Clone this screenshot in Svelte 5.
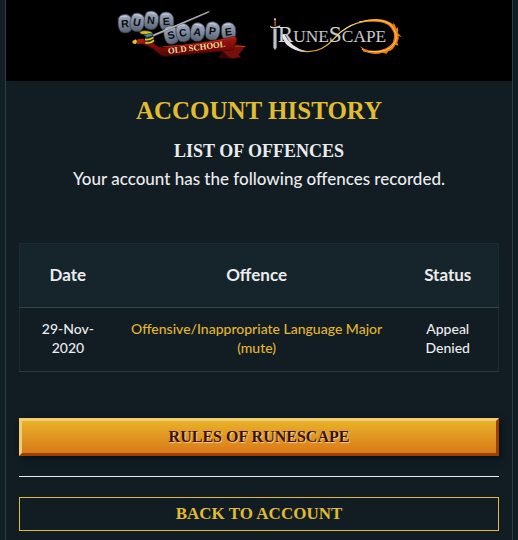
<script>
  const offences = [
    { date: "29-Nov-2020", offence: "Offensive/Inappropriate Language Major (mute)", status: "Appeal Denied" },
  ];

  // rune stones of the Old School logo: position, tilt and letter
  const stones = [
    { x: 25, y: 41, tilt: -6, letter: "R" },
    { x: 61, y: 37, tilt: 10, letter: "U" },
    { x: 103, y: 31, tilt: 6, letter: "N" },
    { x: 149, y: 34, tilt: -4, letter: "E" },
    { x: 163, y: 75, tilt: -14, letter: "S" },
    { x: 199, y: 68, tilt: -10, letter: "C" },
    { x: 242, y: 66, tilt: 10, letter: "A" },
    { x: 287, y: 63, tilt: 6, letter: "P" },
    { x: 335, y: 65, tilt: -6, letter: "E" },
  ];
</script>

<div class="panel">
  <header>
    <a class="logo" href="#oldschool" aria-label="Old School RuneScape">
      <svg width="130" height="50" viewBox="0 0 390 150" aria-hidden="true">
        <defs>
          <linearGradient id="stone" x1="0" y1="0" x2="0" y2="1">
            <stop offset="0" stop-color="#a7b0c0" />
            <stop offset="0.5" stop-color="#7f8a9c" />
            <stop offset="1" stop-color="#586273" />
          </linearGradient>
          <linearGradient id="ribbon" x1="0" y1="0" x2="0" y2="1">
            <stop offset="0" stop-color="#a31a14" />
            <stop offset="0.5" stop-color="#7f0d0a" />
            <stop offset="1" stop-color="#4e0605" />
          </linearGradient>
        </defs>
        {#each stones as stone}
          <g transform="translate({stone.x + 2} {stone.y}) rotate({stone.tilt})">
            <path d="M-18 -18 Q-14 -28 0 -28 Q17 -27 22 -11 Q25 15 13 25 Q-2 32 -15 23 Q-25 8 -18 -18Z" fill="url(#stone)" stroke="#323a48" stroke-width="2" />
            <path d="M-12 -20 Q-3 -25 9 -20" fill="none" stroke="#c4ccda" stroke-width="3" />
            <text class="rune" x="0" y="11">{stone.letter}</text>
          </g>
        {/each}
        <path d="M108 74 L276 5 L283 1 L278 8 L112 80Z" fill="#85888e" />
        <path d="M112 76 L277 5" stroke="#d4d5d8" stroke-width="2" />
        <path d="M318 121 L311 144 L356 145 L375 142 L368 134 L388 109 L359 104 L322 112Z" fill="#75100c" stroke="#3a0504" stroke-width="2" />
        <path d="M342 111 Q360 106 388 110" fill="none" stroke="#c73b22" stroke-width="3" />
        <path d="M315 120 L342 143 L314 144Z" fill="#330404" />
        <path d="M63 91 Q96 85 119 105 Q135 119 157 108 Q241 104 357 79 L363 87 L352 120 Q248 129 146 139 Q126 133 112 116 Q91 104 75 101Z" fill="url(#ribbon)" stroke="#4a0604" stroke-width="2" />
        <path d="M140 110 Q252 106 357 81" fill="none" stroke="#cb3928" stroke-width="2" />
        <path d="M54 96 L66 88 L84 86 L82 98 L66 103Z" fill="#a81d12" />
        <path d="M50 92 L60 88 L63 96 L58 103 L49 99Z" fill="#e4c52b" />
        <path d="M71 66 Q84 58 107 66 L111 75 L98 74 L75 72Z" fill="#d8bd2a" stroke="#58470a" stroke-width="2" />
        <path d="M87 79 Q102 86 110 76 Q119 87 113 99 Q99 108 89 96Z" fill="#2d2b15" />
        <path d="M87 88 Q102 91 112 82 M88 98 Q103 102 114 91" fill="none" stroke="#e5cb30" stroke-width="5" />
        <path d="M84 77 Q96 69 107 71 L110 78 L94 82Z" fill="#4a9199" stroke="#153a40" stroke-width="2" />
        <text class="school" x="242" y="121" transform="rotate(-7 242 112)">OLD SCHOOL</text>
      </svg>
    </a>
    <a class="logo" href="#runescape" aria-label="RuneScape">
      <svg width="132" height="40" viewBox="0 0 396 120" aria-hidden="true">
        <defs>
          <linearGradient id="steel" x1="0" y1="0" x2="0" y2="1">
            <stop offset="0" stop-color="#ffffff" />
            <stop offset="0.5" stop-color="#b9bdc0" />
            <stop offset="1" stop-color="#eceeee" />
          </linearGradient>
          <linearGradient id="flame" x1="0" y1="0" x2="1" y2="0">
            <stop offset="0" stop-color="#d8d8d2" />
            <stop offset="0.15" stop-color="#d9961c" />
            <stop offset="0.5" stop-color="#ffe080" />
            <stop offset="0.75" stop-color="#f5a31c" />
            <stop offset="1" stop-color="#eb6712" />
          </linearGradient>
        </defs>
        <text class="steel" x="23" y="74"><tspan class="big">R</tspan>UNE<tspan class="big">S</tspan>CAPE</text>
        <path d="M10 35 H20 V92 L15 99 L10 92Z" fill="#a9adb0" stroke="#66696b" />
        <path d="M15 35 V94" stroke="#eee" stroke-width="2" />
        <path d="M0 26 Q12 34 31 25 L30 31 Q15 36 2 32Z" fill="#d7d7d5" />
        <path d="M13 9 H18 V28 H13Z" fill="#a04e20" />
        <circle cx="15" cy="7" r="3" fill="#ddd" />
        <path d="M43 52 Q62 92 111 104 Q77 106 51 84 Q38 70 36 54Z" fill="#e3e5e4" />
        <path d="M83 99 Q145 117 190 67 Q246 3 332 12 Q382 20 382 59 Q375 105 315 107 Q286 106 276 96" fill="none" stroke="url(#flame)" stroke-width="4" />
        <path d="M270 16 Q322 -4 360 16 L371 23 L369 16 Q378 25 379 35 L384 30 Q386 41 383 47 L395 60 L386 57 Q388 67 382 76 L385 86 L376 83 Q371 99 355 103 L350 110 L338 107 Q309 116 287 103 L280 105 L279 98 L269 87 L284 96 Q313 108 348 94 Q379 77 371 47 Q360 16 322 14 Q295 12 270 16Z" fill="#ee7b15" />
        <path d="M267 15 Q329 -1 361 22 Q387 49 375 77 Q355 110 296 103" fill="none" stroke="#ffd247" stroke-width="3" />
      </svg>
    </a>
  </header>

  <main>
    <h1>ACCOUNT HISTORY</h1>
    <h2>LIST OF OFFENCES</h2>
    <p class="intro">Your account has the following offences recorded.</p>

    <table>
      <thead>
        <tr>
          <th class="col-date" scope="col">Date</th>
          <th scope="col">Offence</th>
          <th class="col-status" scope="col">Status</th>
        </tr>
      </thead>
      <tbody>
        {#each offences as row}
          <tr>
            <td>{row.date}</td>
            <td><a href="#offence">{row.offence}</a></td>
            <td>{row.status}</td>
          </tr>
        {/each}
      </tbody>
    </table>

    <a class="btn btn-gold" href="#rules">RULES OF RUNESCAPE</a>
    <hr />
    <a class="btn btn-outline" href="#account">BACK TO ACCOUNT</a>
  </main>
</div>

<style>
  :global(body) {
    margin: 0;
    background: #111e23;
  }

  .panel {
    margin: 0 5px;
    border: solid #2b3d47;
    border-width: 0 1px;
    background: #111d22;
    color: #ecebee;
    font-family: Lato, "Open Sans", sans-serif;
    font-weight: 500;
    text-align: center;
  }

  header {
    display: flex;
    justify-content: center;
    align-items: flex-start;
    gap: 24px;
    box-sizing: border-box;
    height: 81px;
    padding-top: 10px;
    background: #000;
  }

  .logo {
    display: block;
  }

  .logo + .logo {
    padding-top: 7px;
  }

  .logo svg {
    display: block;
    overflow: visible;
  }

  .rune {
    fill: #0b0d12;
    font: bold 32px "Liberation Sans", sans-serif;
    text-anchor: middle;
  }

  .school {
    fill: #f3d793;
    font: bold 26px "Liberation Serif", serif;
    text-anchor: middle;
  }

  .steel {
    fill: url(#steel);
    font: 52px "Liberation Serif", serif;
  }

  .steel .big {
    font-size: 70px;
  }

  main {
    padding: 14px 13px 32px;
  }

  h1,
  h2,
  .btn {
    font-family: "Liberation Serif", serif;
    font-weight: bold;
  }

  h1 {
    margin: 0;
    color: #e1bb34;
    font-size: 25px;
    line-height: 32px;
  }

  h2 {
    margin: 12px 0 4px;
    font-size: 18px;
    line-height: 24px;
  }

  .intro {
    margin: 0 0 52px;
    font-size: 17px;
    line-height: 24px;
  }

  table {
    width: 100%;
    table-layout: fixed;
    border: 1px solid #1c2b32;
    border-bottom-color: #2b3941;
    border-collapse: collapse;
  }

  th {
    height: 60px;
    padding: 0 0 3px;
    border-bottom: 1px solid #34434a;
    background: #15252b;
    font-size: 17px;
    font-weight: bold;
  }

  td {
    padding: 11px 12px 14px;
    font-size: 14px;
    line-height: 19px;
    vertical-align: top;
  }

  .col-date {
    width: 20%;
  }

  .col-status {
    width: 21%;
  }

  td:last-child {
    padding-inline: 20px;
  }

  td a {
    color: #e1b52e;
    text-decoration: none;
  }

  .btn {
    display: block;
    box-sizing: border-box;
    font-size: 17px;
    line-height: 32px;
    text-decoration: none;
  }

  .btn-gold {
    margin-top: 46px;
    border: 3px solid;
    border-color: #f0cd70 #9f3e00 #9f3e00 #f0cd70;
    background: linear-gradient(#e8b129, #d97a18);
    box-shadow: 2px 3px 5px #03141c;
    color: #3d120c;
    font-size: 16px;
    text-shadow: 1px 1px 1px #f3d59a;
  }

  .btn-outline {
    border: 1px solid #e1bb34;
    color: #e1bb34;
  }

  hr {
    height: 1px;
    margin: 20px 0;
    border: 0;
    background: #eeedf2;
  }
</style>
